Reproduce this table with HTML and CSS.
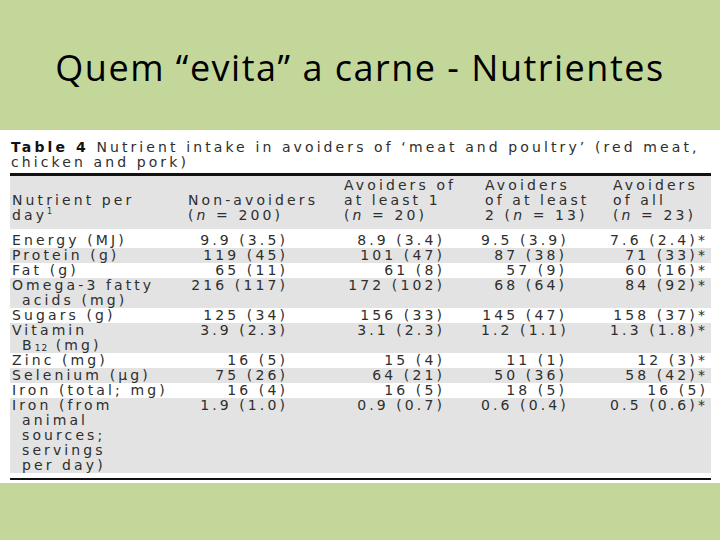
FILE: index.html
```html
<!DOCTYPE html>
<html lang="pt">
<head>
<meta charset="utf-8">
<title>Quem “evita” a carne - Nutrientes</title>
<link rel="stylesheet" href="styles.css">
</head>
<body>
<div class="slide">
  <header class="title-bar">
    <h1>Quem “evita” a carne - Nutrientes</h1>
  </header>
  <section class="panel">
    <p class="caption"><b>Table 4</b> Nutrient intake in avoiders of ‘meat and poultry’ (red meat,<br>chicken and pork)</p>
    <table class="nutr">
      <colgroup>
        <col class="w1"><col class="w2"><col class="w3"><col class="w4"><col class="w5">
      </colgroup>
      <thead>
        <tr>
          <th class="h1">Nutrient per<br>day<sup>1</sup></th>
          <th class="h2">Non-avoiders<br>(<i>n</i> = 200)</th>
          <th class="h3">Avoiders of<br>at least 1<br>(<i>n</i> = 20)</th>
          <th class="h4">Avoiders<br>of at least<br>2 (<i>n</i> = 13)</th>
          <th class="h5">Avoiders<br>of all<br>(<i>n</i> = 23)</th>
        </tr>
      </thead>
      <tbody>
        <tr class="gap"><td colspan="5"></td></tr>
        <tr><td class="c1">Energy (MJ)</td><td class="c2">9.9 (3.5)</td><td class="c3">8.9 (3.4)</td><td class="c4">9.5 (3.9)</td><td class="c5">7.6 (2.4)*</td></tr>
        <tr class="alt"><td class="c1">Protein (g)</td><td class="c2">119 (45)</td><td class="c3">101 (47)</td><td class="c4">87 (38)</td><td class="c5">71 (33)*</td></tr>
        <tr><td class="c1">Fat (g)</td><td class="c2">65 (11)</td><td class="c3">61 (8)</td><td class="c4">57 (9)</td><td class="c5">60 (16)*</td></tr>
        <tr class="alt"><td class="c1">Omega-3 fatty<br><span class="ind">acids (mg)</span></td><td class="c2">216 (117)</td><td class="c3">172 (102)</td><td class="c4">68 (64)</td><td class="c5">84 (92)*</td></tr>
        <tr><td class="c1">Sugars (g)</td><td class="c2">125 (34)</td><td class="c3">156 (33)</td><td class="c4">145 (47)</td><td class="c5">158 (37)*</td></tr>
        <tr class="alt"><td class="c1">Vitamin<br><span class="ind">B<span class="sub">12</span> (mg)</span></td><td class="c2">3.9 (2.3)</td><td class="c3">3.1 (2.3)</td><td class="c4">1.2 (1.1)</td><td class="c5">1.3 (1.8)*</td></tr>
        <tr><td class="c1">Zinc (mg)</td><td class="c2">16 (5)</td><td class="c3">15 (4)</td><td class="c4">11 (1)</td><td class="c5">12 (3)*</td></tr>
        <tr class="alt"><td class="c1">Selenium (µg)</td><td class="c2">75 (26)</td><td class="c3">64 (21)</td><td class="c4">50 (36)</td><td class="c5">58 (42)*</td></tr>
        <tr><td class="c1">Iron (total; mg)</td><td class="c2">16 (4)</td><td class="c3">16 (5)</td><td class="c4">18 (5)</td><td class="c5">16 (5)</td></tr>
        <tr class="alt"><td class="c1">Iron (from<br><span class="ind">animal</span><br><span class="ind">sources;</span><br><span class="ind">servings</span><br><span class="ind">per day)</span></td><td class="c2">1.9 (1.0)</td><td class="c3">0.9 (0.7)</td><td class="c4">0.6 (0.4)</td><td class="c5">0.5 (0.6)*</td></tr>
        <tr class="gap-end"><td colspan="5"></td></tr>
      </tbody>
    </table>
  </section>
</div>
</body>
</html>
```

FILE: styles.css
```css
html, body {
  margin: 0;
  padding: 0;
}

body {
  width: 720px;
  height: 540px;
  overflow: hidden;
  background: #c4d79b;
}

.slide {
  width: 720px;
  height: 540px;
  background: #c4d79b;
  display: flex;
  flex-direction: column;
}

.title-bar {
  height: 130px;
  display: flex;
  align-items: center;
  justify-content: center;
  padding-top: 4px;
  box-sizing: border-box;
}

.title-bar h1 {
  margin: 0;
  font-family: "Open Sans", "Liberation Sans", sans-serif;
  font-weight: 400;
  font-size: 36px;
  color: #000;
  letter-spacing: 1.5px;
}

.panel {
  background: #fff;
  height: 353px;
  box-sizing: border-box;
  padding: 10px 9px 0 10px;
  font-family: "DejaVu Sans", "Liberation Sans", sans-serif;
  font-size: 14px;
  letter-spacing: 3.1px;
  color: #2e2e2e;
}

.caption {
  margin: 0 0 3px 1px;
  line-height: 15px;
  white-space: nowrap;
}

.caption b {
  font-weight: 700;
  color: #111;
}

.nutr {
  border-collapse: collapse;
  width: 701px;
  table-layout: fixed;
  border-top: 3px solid #111;
  border-bottom: 2px solid #111;
}

.w1 { width: 175px; }
.w2 { width: 155px; }
.w3 { width: 141px; }
.w4 { width: 128px; }
.w5 { width: 102px; }

.nutr th {
  background: #e3e3e3;
  font-weight: 400;
  text-align: left;
  vertical-align: bottom;
  line-height: 15px;
  padding: 2px 0 6px 4px;
  white-space: nowrap;
}

.nutr th.h1 { padding-left: 2px; }
.nutr th.h2 { padding-left: 3px; }

.nutr sup {
  font-size: 8px;
  line-height: 0;
  letter-spacing: 0;
}

.nutr .sub {
  font-size: 9px;
  letter-spacing: 1px;
  vertical-align: -1px;
  line-height: 1;
}

.nutr td {
  padding: 0;
  line-height: 15px;
  vertical-align: top;
  white-space: nowrap;
}

.nutr tr.alt td {
  background: #e3e3e3;
}

.nutr tr.gap td {
  height: 4px;
  line-height: 0;
}

.nutr tr.gap-end td {
  height: 5px;
  line-height: 0;
}

.nutr td.c1 {
  text-align: left;
  padding-left: 2px;
}

.nutr .ind {
  padding-left: 10px;
}

.nutr td.c2, .nutr td.c3, .nutr td.c4, .nutr td.c5 {
  text-align: right;
}

.nutr td.c2 { padding-right: 52px; }
.nutr td.c3 { padding-right: 36px; }
.nutr td.c4 { padding-right: 42px; }
.nutr td.c5 { padding-right: 3px; }
```
